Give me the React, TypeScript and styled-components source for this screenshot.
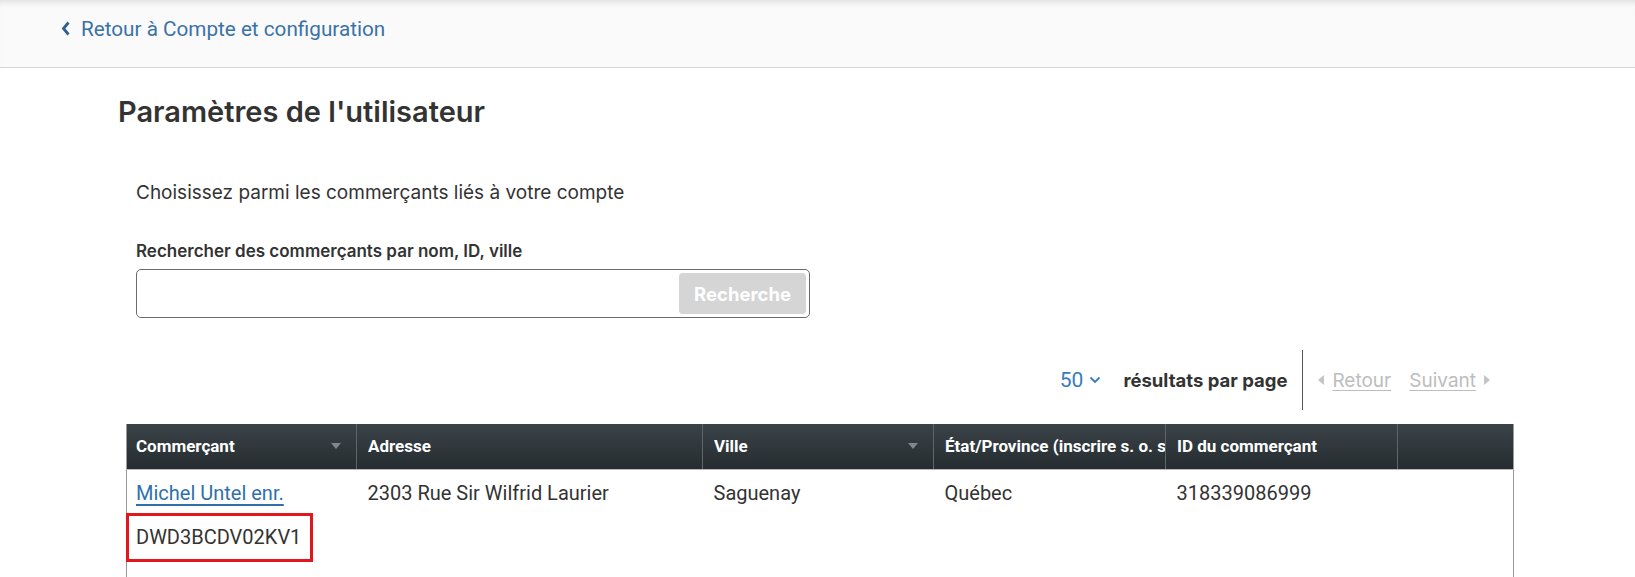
import React from "react";
import styled, { createGlobalStyle } from "styled-components";

const GlobalStyle = createGlobalStyle`
  html, body { margin: 0; padding: 0; background: #ffffff; }
  body { font-family: Inter, "Noto Sans", sans-serif; color: #333333; }
  * { box-sizing: border-box; }
`;

const TopBar = styled.header`
  height: 68px;
  background: #fafafa;
  border-bottom: 1px solid #d6d6d6;
  box-shadow: inset 0 6px 6px -4px rgba(0, 0, 0, 0.12);
  display: flex;
  align-items: center;
  padding: 0 0 10px 61px;
`;

const BackLink = styled.a`
  display: flex;
  align-items: center;
  gap: 10px;
  font-family: Roboto, "Liberation Sans", sans-serif;
  font-size: 20.7px;
  color: #3a72a8;
  text-decoration: none;
  cursor: pointer;
`;

const Main = styled.main`
  padding-left: 118px;
`;

const Title = styled.h1`
  margin: 26px 0 0;
  font-size: 29px;
  line-height: 36px;
  font-weight: 600;
  color: #333333;
`;

const Section = styled.section`
  padding-left: 18px;
`;

const Intro = styled.p`
  margin: 51px 0 0;
  font-size: 19px;
  line-height: 24px;
  color: #333333;
`;

const FieldLabel = styled.label`
  display: block;
  margin-top: 35px;
  font-size: 17px;
  line-height: 22px;
  font-weight: 600;
  color: #333333;
`;

const SearchBox = styled.div`
  margin-top: 7px;
  width: 674px;
  height: 49px;
  border: 1px solid #6b6b6b;
  border-radius: 5px;
  display: flex;
  align-items: center;
  padding: 0 3px 0 10px;
`;

const SearchInput = styled.input`
  flex: 1;
  height: 100%;
  border: none;
  outline: none;
  background: transparent;
  font-family: Inter, sans-serif;
  font-size: 18px;
`;

const SearchButton = styled.button`
  width: 127px;
  height: 41px;
  border: none;
  border-radius: 4px;
  background: #d5d5d5;
  color: #ffffff;
  font-family: Inter, sans-serif;
  font-size: 18.5px;
  font-weight: 700;
  padding: 0;
`;

const TableArea = styled.div`
  margin-left: 8px;
  width: 1387px;
`;

const PagerRow = styled.div`
  margin-top: 32px;
  height: 60px;
  display: flex;
  align-items: center;
  justify-content: flex-end;
  padding-right: 23px;
`;

const PerPage = styled.span`
  display: flex;
  align-items: center;
  gap: 6px;
  font-family: Roboto, sans-serif;
  font-size: 21px;
  color: #3a7bbd;
  margin-right: 22px;
`;

const PagerLabel = styled.span`
  font-size: 18.5px;
  font-weight: 700;
  color: #333333;
`;

const Divider = styled.span`
  align-self: stretch;
  width: 1px;
  background: #555555;
  margin: 0 15px;
`;

const PagerLink = styled.a<{ $gap: string }>`
  display: flex;
  align-items: center;
  gap: ${(p) => p.$gap};
  font-size: 19px;
  color: #bdbdbd;
  cursor: default;
  span {
    text-decoration: underline;
    text-underline-offset: 3px;
  }
`;

const PagerSpacer = styled.span`
  width: 18px;
`;

const Table = styled.table`
  margin-top: 14px;
  width: 1387px;
  border-collapse: collapse;
  table-layout: fixed;
  border-left: 1px solid #9a9a9a;
  border-right: 1px solid #9a9a9a;
`;

const HeadCell = styled.th<{ $sortable?: boolean }>`
  position: relative;
  height: 45px;
  padding: 0 ${(p) => (p.$sortable ? "28px" : "0")} 0 11px;
  background: linear-gradient(#3a4348, #252c30);
  color: #ffffff;
  font-family: Roboto, sans-serif;
  font-size: 17px;
  font-weight: 700;
  text-align: left;
  white-space: nowrap;
  overflow: hidden;
  border-left: 1px solid #5d666b;
  border-bottom: 1px solid #b8b8b8;
  &:first-child {
    border-left: none;
    padding-left: 9px;
  }
`;

const HeadText = styled.div`
  overflow: hidden;
  white-space: nowrap;
  text-overflow: clip;
`;

const SortMark = styled.svg`
  position: absolute;
  right: 15px;
  top: 19px;
`;

const Cell = styled.td`
  vertical-align: top;
  padding: 11px 11px 30px;
  font-family: Roboto, sans-serif;
  font-size: 20px;
  line-height: 24px;
  color: #333333;
  &:first-child {
    padding-left: 9px;
  }
`;

const MerchantLink = styled.a`
  color: #2f6fac;
  text-decoration: underline;
  text-underline-offset: 4px;
  cursor: pointer;
`;

const CodeBox = styled.div`
  display: inline-block;
  margin: 8px 0 0 -10px;
  padding: 9px 9px 10px 7px;
  border: 3px solid #e3161d;
  line-height: 24px;
  color: #333333;
`;

const Triangle = ({ dir }: { dir: "left" | "right" }) => (
  <svg width="6" height="10" viewBox="0 0 6 10">
    {dir === "left" ? (
      <polygon points="6,0 6,10 0,5" fill="#c4c4c4" />
    ) : (
      <polygon points="0,0 0,10 6,5" fill="#c4c4c4" />
    )}
  </svg>
);

const Sort = () => (
  <SortMark width="10" height="6" viewBox="0 0 10 6">
    <polygon points="0,0 10,0 5,6" fill="#7f888d" />
  </SortMark>
);

export default function App() {
  return (
    <>
      <GlobalStyle />
      <TopBar>
        <BackLink>
          <svg width="10" height="15" viewBox="0 0 10 15">
            <polyline
              points="7.5,1.5 2.5,7.5 7.5,13.5"
              fill="none"
              stroke="#2d5f92"
              strokeWidth="2.8"
            />
          </svg>
          Retour à Compte et configuration
        </BackLink>
      </TopBar>
      <Main>
        <Title>Paramètres de l'utilisateur</Title>
        <Section>
          <Intro>Choisissez parmi les commerçants liés à votre compte</Intro>
          <FieldLabel htmlFor="merchant-search">
            Rechercher des commerçants par nom, ID, ville
          </FieldLabel>
          <SearchBox>
            <SearchInput id="merchant-search" />
            <SearchButton>Recherche</SearchButton>
          </SearchBox>
        </Section>
        <TableArea>
          <PagerRow>
            <PerPage>
              50
              <svg width="12" height="8" viewBox="0 0 12 8">
                <polyline
                  points="1.5,1.5 6,6 10.5,1.5"
                  fill="none"
                  stroke="#3a7bbd"
                  strokeWidth="1.8"
                />
              </svg>
            </PerPage>
            <PagerLabel>résultats par page</PagerLabel>
            <Divider />
            <PagerLink $gap="8px">
              <Triangle dir="left" />
              <span>Retour</span>
            </PagerLink>
            <PagerSpacer />
            <PagerLink $gap="8px">
              <span>Suivant</span>
              <Triangle dir="right" />
            </PagerLink>
          </PagerRow>
          <Table>
            <colgroup>
              <col style={{ width: 230 }} />
              <col style={{ width: 346 }} />
              <col style={{ width: 231 }} />
              <col style={{ width: 232 }} />
              <col style={{ width: 232 }} />
              <col style={{ width: 116 }} />
            </colgroup>
            <thead>
              <tr>
                <HeadCell $sortable>
                  <HeadText>Commerçant</HeadText>
                  <Sort />
                </HeadCell>
                <HeadCell>
                  <HeadText>Adresse</HeadText>
                </HeadCell>
                <HeadCell $sortable>
                  <HeadText>Ville</HeadText>
                  <Sort />
                </HeadCell>
                <HeadCell>
                  <HeadText>État/Province (inscrire s. o. si non applicable)</HeadText>
                </HeadCell>
                <HeadCell>
                  <HeadText>ID du commerçant</HeadText>
                </HeadCell>
                <HeadCell />
              </tr>
            </thead>
            <tbody>
              <tr>
                <Cell>
                  <MerchantLink>Michel Untel enr.</MerchantLink>
                  <br />
                  <CodeBox>DWD3BCDV02KV1</CodeBox>
                </Cell>
                <Cell>2303 Rue Sir Wilfrid Laurier</Cell>
                <Cell>Saguenay</Cell>
                <Cell>Québec</Cell>
                <Cell>318339086999</Cell>
                <Cell />
              </tr>
            </tbody>
          </Table>
        </TableArea>
      </Main>
    </>
  );
}
